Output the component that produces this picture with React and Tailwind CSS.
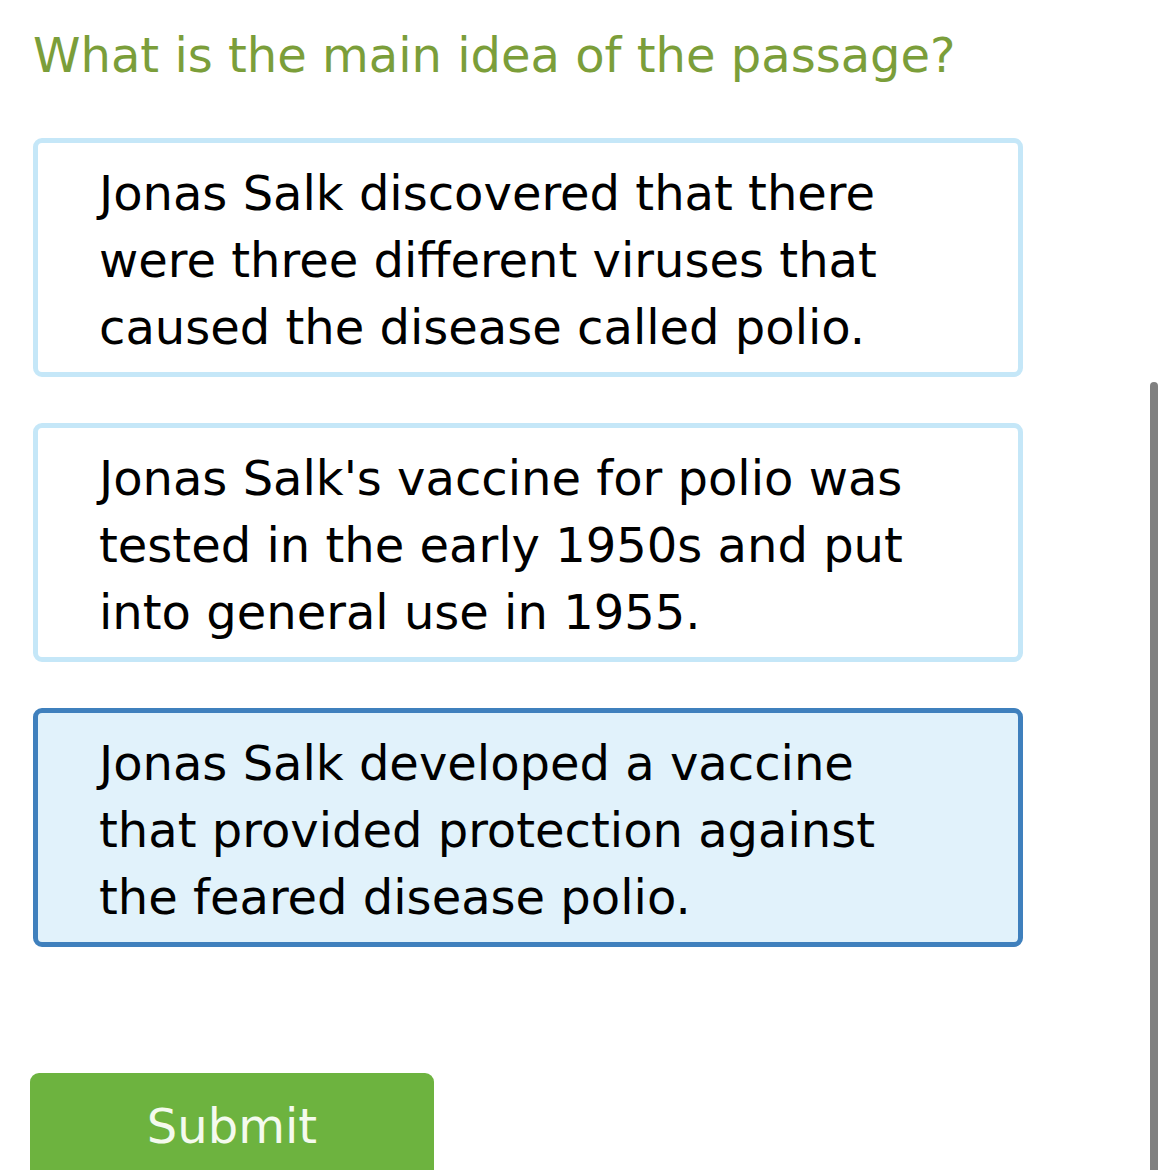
const choices = [
  'Jonas Salk discovered that there were three different viruses that caused the disease called polio.',
  "Jonas Salk's vaccine for polio was tested in the early 1950s and put into general use in 1955.",
  'Jonas Salk developed a vaccine that provided protection against the feared disease polio.',
];

function Choice({ text, selected }) {
  return (
    <div
      className={
        selected
          ? 'w-[990px] rounded-[9px] border-[5px] border-[#3f80bd] bg-[#e1f2fb] pl-[61px] pr-8 pt-[17px] pb-[11px]'
          : 'w-[990px] rounded-[9px] border-[5px] border-[#c5e7f8] bg-white pl-[61px] pr-8 pt-[17px] pb-[11px]'
      }
    >
      <p className="w-[820px] text-[48px] leading-[67px] text-black">{text}</p>
    </div>
  );
}

export default function App() {
  return (
    <div className="relative h-[1170px] overflow-hidden bg-white font-['DejaVu_Sans',sans-serif]">
      <div className="pl-[33px] pt-[22px]">
        <h1 className="text-[48px] leading-[67px] text-[#7b9e3a]">
          What is the main idea of the passage?
        </h1>

        <div className="mt-[49px] flex flex-col gap-[46px]">
          {choices.map((c, i) => (
            <Choice key={i} text={c} selected={i === 2} />
          ))}
        </div>

        <button className="mt-[126px] -ml-[3px] h-[110px] w-[404px] rounded-[9px] bg-[#6db33f] pb-[4px] text-[48px] text-[#f4faee]">
          Submit
        </button>
      </div>

      {/* scrollbar */}
      <div className="absolute right-[10px] top-[382px] h-[800px] w-[8px] rounded-full bg-[#808080]" />
    </div>
  );
}
